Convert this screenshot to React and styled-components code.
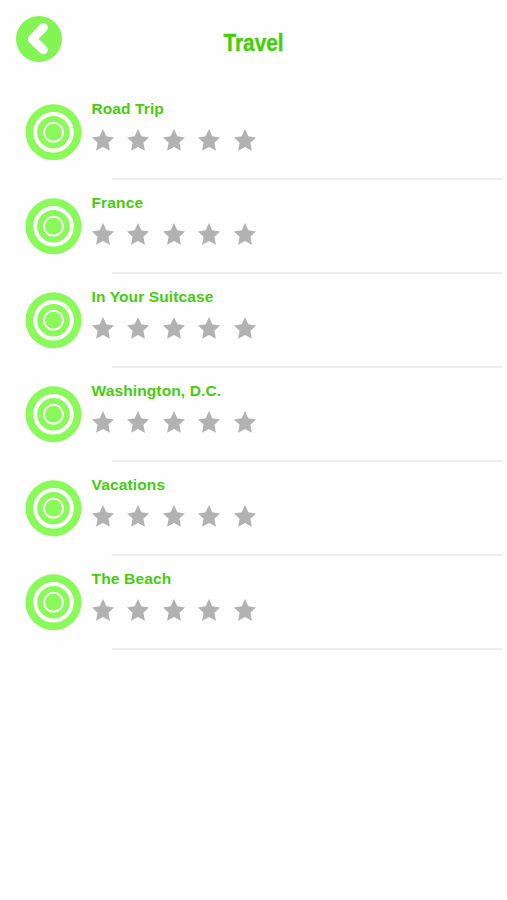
import styled, { createGlobalStyle } from "styled-components";

const GlobalStyle = createGlobalStyle`
  * {
    box-sizing: border-box;
  }

  body {
    margin: 0;
    background: #fefefe;
    font-family: "Liberation Sans", Arial, sans-serif;
  }
`;

const Screen = styled.main`
  width: 507px;
  height: 900px;
  overflow: hidden;
`;

const Header = styled.header`
  display: grid;
  grid-template-columns: 62px 1fr 62px;
  height: 86px;
  padding: 16px 16px 0;
`;

const BackButton = styled.button`
  width: 46px;
  height: 46px;
  padding: 0;
  border: none;
  background: none;
  cursor: pointer;

  svg {
    display: block;
  }
`;

const Title = styled.h1`
  margin: 13px 0 0;
  font-size: 24.5px;
  line-height: 28px;
  font-weight: bold;
  text-align: center;
  color: #46cd0c;
  -webkit-text-stroke: 0.4px #46cd0c;
  transform: scaleX(0.85);
`;

const TopicList = styled.ul`
  margin: 0;
  padding: 0;
  list-style: none;
`;

const TopicItem = styled.li`
  display: grid;
  grid-template-columns: 57px 1fr;
  column-gap: 9.5px;
  height: 94px;
  padding: 18px 4px 0 25px;
`;

const Info = styled.div`
  display: flex;
  flex-direction: column;
  height: 76px;
`;

const TopicName = styled.h2`
  margin: -4px 0 0;
  font-size: 15.5px;
  line-height: 18px;
  font-weight: bold;
  letter-spacing: ${(props) => props.$spacing || 0}px;
  color: #46cd0c;
`;

const Stars = styled.div`
  display: flex;
  gap: 13.5px;
  margin-top: 10.5px;

  svg {
    display: block;
    flex: none;
  }
`;

const Divider = styled.div`
  height: 2px;
  margin: auto 0 0 20.5px;
  background: #efefef;
`;

const topics = [
  { name: "Road Trip", spacing: 0.1 },
  { name: "France", spacing: 0.15 },
  { name: "In Your Suitcase", spacing: 0.12 },
  { name: "Washington, D.C.", spacing: 0.12 },
  { name: "Vacations", spacing: 0.15 },
  { name: "The Beach", spacing: 0.18 },
];

function BackIcon() {
  return (
    <svg width="46" height="46" viewBox="0 0 46 46">
      <circle cx="23" cy="23" r="23" fill="#82f454" />
      <path
        d="M27.3 11.5L16.3 23L27.3 33.8"
        fill="none"
        stroke="#fff"
        strokeWidth="9"
        strokeLinecap="round"
        strokeLinejoin="round"
      />
    </svg>
  );
}

function TargetIcon() {
  return (
    <svg width="57" height="57" viewBox="0 0 57 57">
      <circle cx="28.5" cy="28.3" r="28" fill="#8af95a" />
      <circle cx="28.5" cy="28.3" r="18.3" fill="none" stroke="#fff" strokeWidth="4" />
      <circle cx="28.5" cy="28.3" r="9.5" fill="none" stroke="#fff" strokeWidth="2" />
    </svg>
  );
}

function StarIcon() {
  return (
    <svg width="22" height="22" viewBox="0 0 22 22">
      <path
        d="M11 0L14.3 7.3L22 8.4L16.4 13.8L17.9 21.8L11 18L4.1 21.8L5.6 13.8L0 8.4L7.7 7.3Z"
        fill="#b2b2b2"
      />
    </svg>
  );
}

function Topic({ name, spacing }) {
  return (
    <TopicItem>
      <TargetIcon />
      <Info>
        <TopicName $spacing={spacing}>{name}</TopicName>
        <Stars>
          {[1, 2, 3, 4, 5].map((star) => (
            <StarIcon key={star} />
          ))}
        </Stars>
        <Divider />
      </Info>
    </TopicItem>
  );
}

function App() {
  return (
    <Screen>
      <GlobalStyle />
      <Header>
        <BackButton aria-label="Back">
          <BackIcon />
        </BackButton>
        <Title>Travel</Title>
      </Header>
      <TopicList>
        {topics.map((topic) => (
          <Topic key={topic.name} {...topic} />
        ))}
      </TopicList>
    </Screen>
  );
}

export default App;
